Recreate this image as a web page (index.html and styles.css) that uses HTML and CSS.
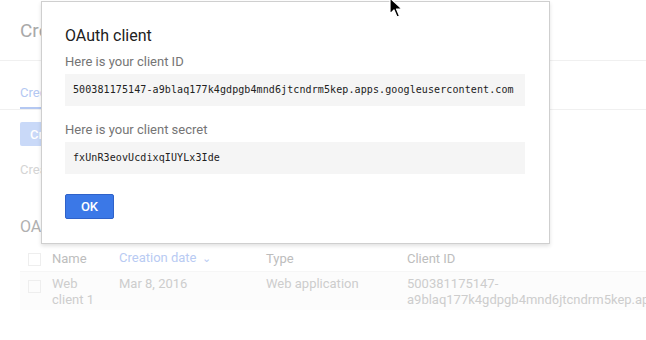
FILE: index.html
```html
<!DOCTYPE html>
<html lang="en">
<head>
    <meta charset="UTF-8">
    <title>Credentials</title>
    <link rel="stylesheet" href="styles.css">
</head>
<body>

<div class="page">
    <div class="page-header">
        <h1>Credentials</h1>
    </div>

    <div class="tabs">
        <span class="tab active">Credentials</span>
        <span class="tab">OAuth consent screen</span>
        <span class="tab">Domain verification</span>
    </div>

    <button class="create-btn">Create credentials</button>
    <p class="hint">Create credentials to access your enabled APIs</p>

    <h2 class="section-title">OAuth 2.0 client IDs</h2>

    <div class="table">
        <div class="row head">
            <span class="cell check"><span class="box"></span></span>
            <span class="cell name">Name</span>
            <span class="cell date sorted">Creation date <span class="caret">&#8964;</span></span>
            <span class="cell type">Type</span>
            <span class="cell cid">Client ID</span>
        </div>
        <div class="row body">
            <span class="cell check"><span class="box"></span></span>
            <span class="cell name">Web client 1</span>
            <span class="cell date">Mar 8, 2016</span>
            <span class="cell type">Web application</span>
            <span class="cell cid">500381175147-a9blaq177k4gdpgb4mnd6jtcndrm5kep.apps.googleusercontent.com</span>
        </div>
    </div>
</div>

<!-- dialogo -->
<div class="dialog">
    <h3 class="dialog-title">OAuth client</h3>
    <div class="field-label">Here is your client ID</div>
    <div class="code">500381175147-a9blaq177k4gdpgb4mnd6jtcndrm5kep.apps.googleusercontent.com</div>
    <div class="field-label second">Here is your client secret</div>
    <div class="code">fxUnR3eovUcdixqIUYLx3Ide</div>
    <button class="ok-btn">OK</button>
</div>

<svg class="cursor" width="14" height="22" viewBox="0 0 14 22">
    <path d="M1 1 L1 17 L5 13 L8 20 L10.5 19 L7.5 12 L13 12 Z" fill="#000" stroke="#fff" stroke-width="1.2" stroke-linejoin="round"/>
</svg>

</body>
</html>
```

FILE: styles.css
```css
/* base */
body {
    margin: 0;
    width: 646px;
    height: 340px;
    overflow: hidden;
    background: #ffffff;
    font-family: 'Roboto', 'Liberation Sans', sans-serif;
    position: relative;
}

.page {
    width: 646px;
}

.page-header {
    height: 60px;
    border-bottom: 1px solid #f0f0f0;
    padding-left: 20px;
    display: flex;
    align-items: center;
}
.page-header h1 {
    margin: 0;
    font-size: 19px;
    font-weight: 400;
    color: #a9a9a9;
}

.tabs {
    height: 48px;
    border-bottom: 1px solid #f0f0f0;
    padding-left: 20px;
    display: flex;
    gap: 24px;
}
.tab {
    font-size: 13px;
    color: #c4c4c4;
    padding-top: 24px;
    height: 24px;
    box-sizing: content-box;
}
.tab.active {
    color: #b4c8f2;
    border-bottom: 2px solid #b4c8f2;
    height: 22px;
}

.create-btn {
    display: block;
    margin: 12px 0 0 20px;
    height: 24px;
    padding: 0 10px;
    border: none;
    border-radius: 2px;
    background: #c9d9f8;
    color: #ffffff;
    font-family: inherit;
    font-size: 13px;
    font-weight: 500;
}

.hint {
    margin: 16px 0 0 20px;
    font-size: 13px;
    color: #d4d4d4;
}

.section-title {
    margin: 40px 0 0 20px;
    font-size: 16px;
    font-weight: 400;
    color: #b0b0b0;
}

.table {
    margin: 10px 0 0 20px;
}
.row {
    display: flex;
    font-size: 13px;
    line-height: 16px;
}
.row.head {
    height: 25px;
    border-bottom: 1px solid #f6f6f6;
    align-items: center;
    color: #bdbdbd;
}
.row.body {
    background: #fcfcfc;
    padding: 4px 0 2px;
    color: #cdcdcd;
}
.cell {
    flex: none;
}
.check {
    width: 32px;
    padding-left: 8px;
    box-sizing: border-box;
}
.row.body .check {
    padding-top: 3px;
}
.box {
    display: block;
    width: 11px;
    height: 11px;
    border: 1px solid #eeeeee;
    margin-top: 1px;
}
.name {
    width: 67px;
    padding-right: 14px;
    box-sizing: border-box;
}
.date {
    width: 147px;
}
.date.sorted {
    color: #b9cbf3;
}
.caret {
    font-size: 11px;
    margin-left: 2px;
}
.type {
    width: 141px;
}
.cid {
    width: 200px;
}

/* dialogo */
.dialog {
    position: absolute;
    left: 41px;
    top: 1px;
    width: 509px;
    box-sizing: border-box;
    padding: 24px 24px 24px 23px;
    background: #ffffff;
    border: 1px solid #cfcfcf;
    box-shadow: 0 2px 4px rgba(0, 0, 0, 0.12);
}
.dialog-title {
    margin: 0;
    font-size: 16px;
    line-height: 20px;
    font-weight: 400;
    color: #212121;
}
.field-label {
    margin-top: 8px;
    font-size: 13px;
    line-height: 16px;
    color: #757575;
}
.field-label.second {
    margin-top: 16px;
}
.code {
    margin-top: 4px;
    width: 460px;
    height: 32px;
    box-sizing: border-box;
    padding: 0 8px;
    background: #f5f5f5;
    font-family: 'DejaVu Sans Mono', 'Liberation Mono', monospace;
    font-size: 10px;
    letter-spacing: 0.1px;
    line-height: 32px;
    color: #212121;
    white-space: nowrap;
}
.ok-btn {
    display: block;
    margin-top: 20px;
    width: 49px;
    height: 25px;
    border: 1px solid #2f62c9;
    border-radius: 2px;
    background: #3b78e7;
    color: #ffffff;
    font-family: inherit;
    font-size: 13px;
    font-weight: 500;
}

.cursor {
    position: absolute;
    left: 389px;
    top: -3px;
}
```
